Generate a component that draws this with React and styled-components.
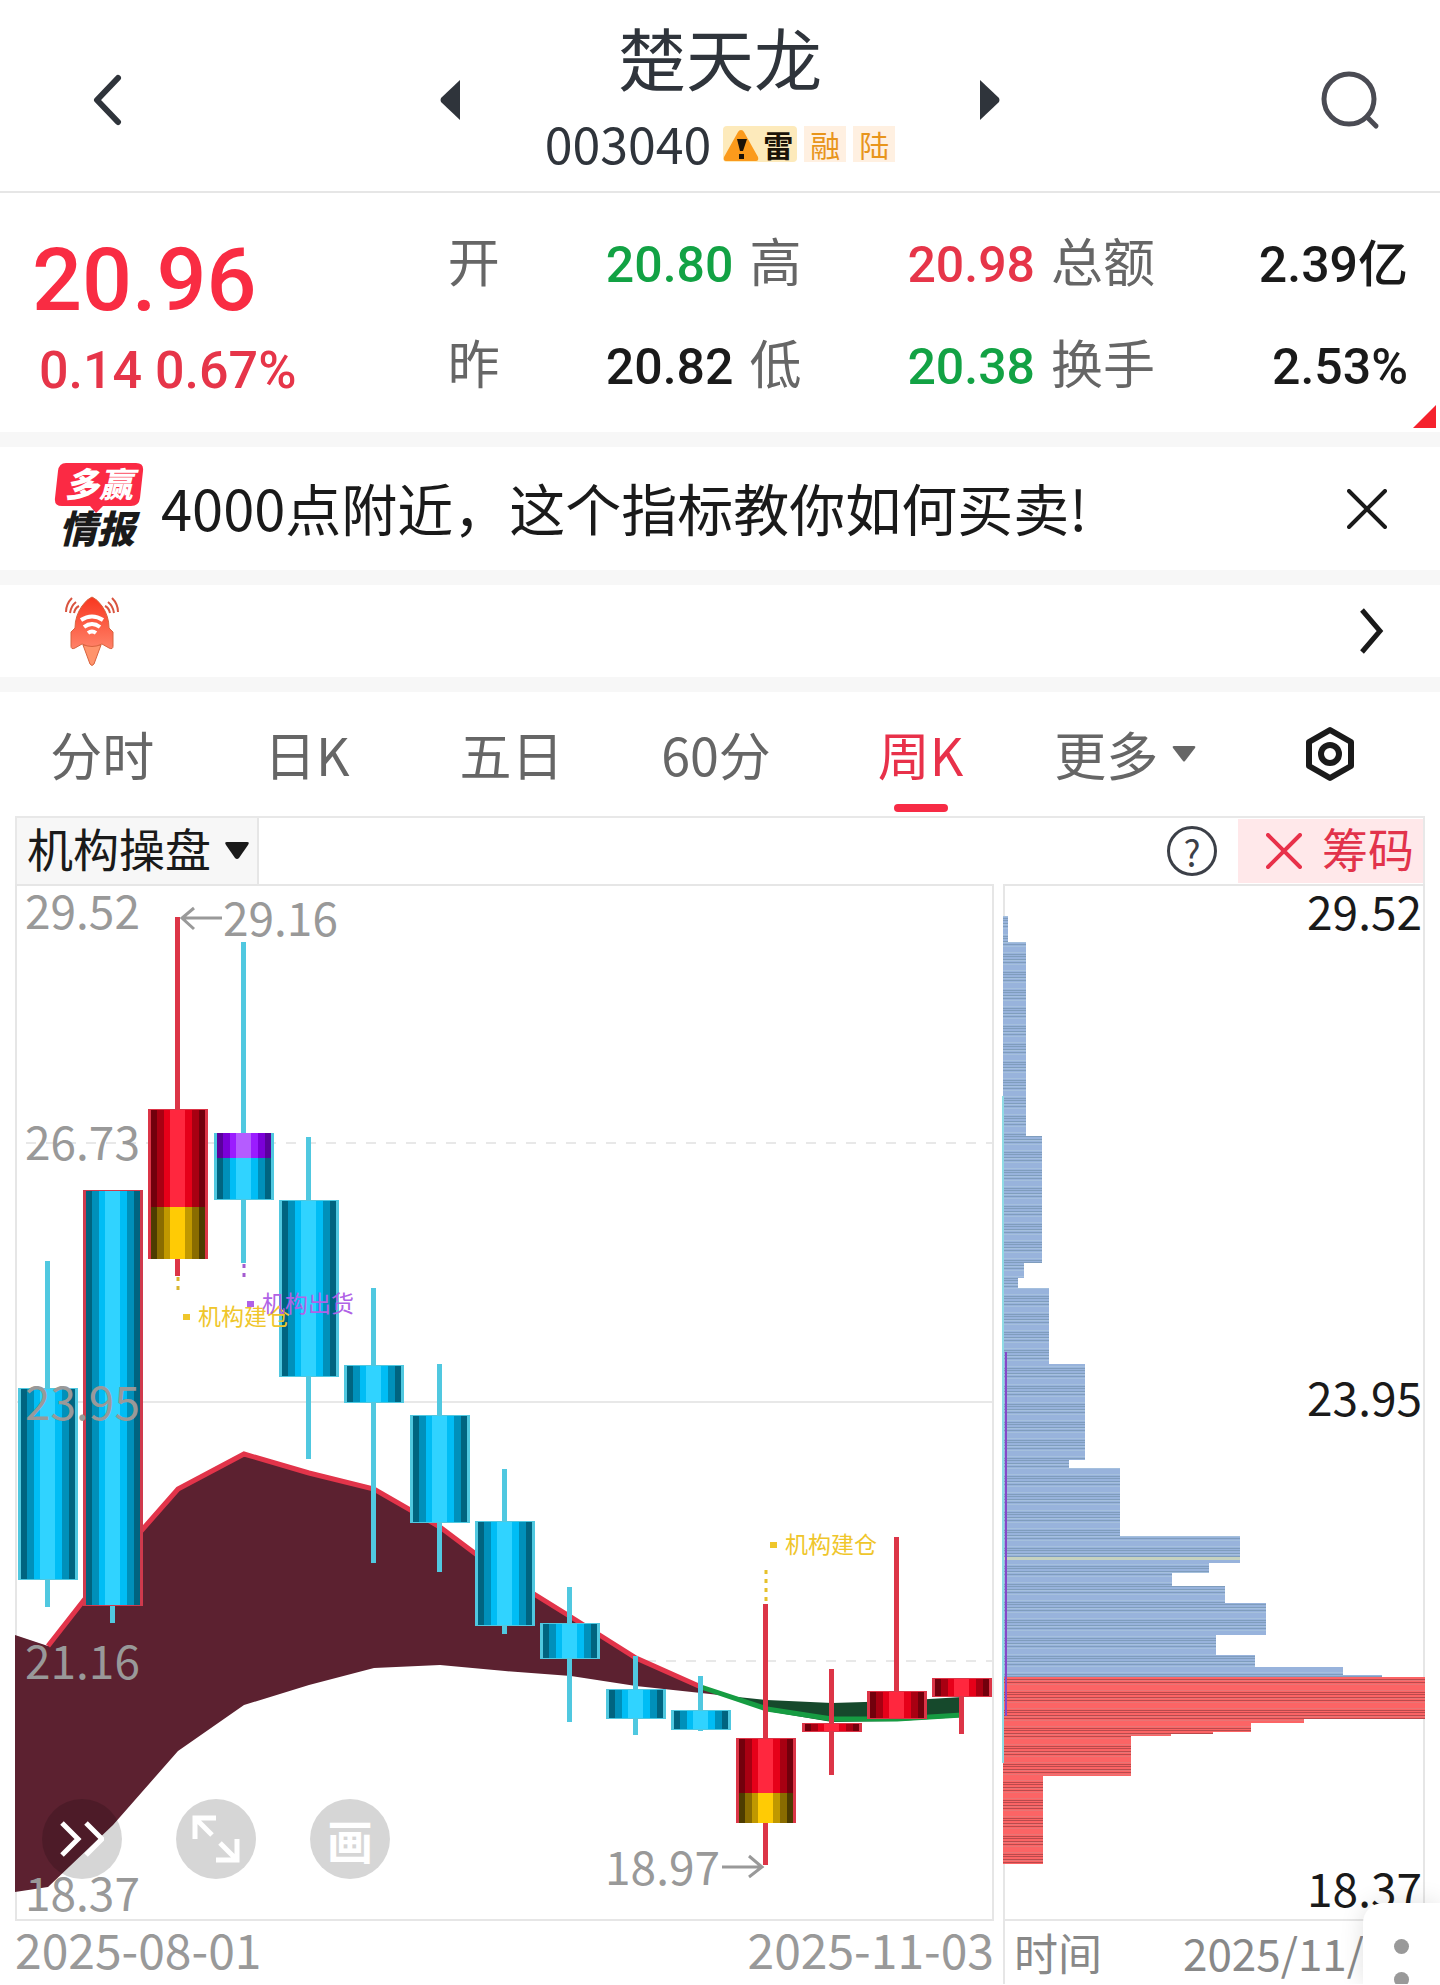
import { useState } from "react";
import styled, { createGlobalStyle } from "styled-components";

const STEP = 65.33;
const FIRST = 32.6;
const BODY = 60;

// high, low, body top and body bottom on the chart's own scale (93 units per yuan)
const candles = [
  { high: 377, top: 504, bottom: 696, low: 723, tone: "cyan" },
  { high: 306, top: 306, bottom: 722, low: 739, tone: "cyan", edge: "#cf3a4d" },
  { high: 33, top: 225, bottom: 375, low: 392, tone: "red", mark: { tone: "gold", from: 323, to: 375 } },
  { high: 58, top: 249, bottom: 316, low: 379, tone: "cyan", mark: { tone: "purple", from: 249, to: 274 } },
  { high: 253, top: 316, bottom: 493, low: 575, tone: "cyan" },
  { high: 404, top: 481, bottom: 519, low: 679, tone: "cyan" },
  { high: 480, top: 531, bottom: 639, low: 688, tone: "cyan" },
  { high: 585, top: 637, bottom: 742, low: 750, tone: "cyan" },
  { high: 703, top: 739, bottom: 775, low: 838, tone: "cyan" },
  { high: 772, top: 805, bottom: 835, low: 851, tone: "cyan" },
  { high: 792, top: 826, bottom: 846, low: 847, tone: "cyan" },
  { high: 720, top: 854, bottom: 939, low: 981, tone: "red", mark: { tone: "gold", from: 909, to: 939 } },
  { high: 785, top: 839, bottom: 848, low: 891, tone: "red" },
  { high: 653, top: 807, bottom: 835, low: 835, tone: "red" },
  { high: 794, top: 794, bottom: 813, low: 850, tone: "red" },
];

// darkest to brightest, from the side of a body to its middle
const tones = {
  cyan: { edge: "#50c8e0", shades: ["#006480", "#0090ba", "#00bdf5", "#30d3ff"] },
  red: { edge: "#dc3547", shades: ["#72000c", "#a80012", "#e60019", "#ff273e"] },
  gold: { edge: "#dc3547", shades: ["#4d3c00", "#8a6c00", "#c09800", "#ffcb05"] },
  purple: { edge: "#50c8e0", shades: ["#5a009c", "#7b00d8", "#9b1cff", "#b55cff"] },
};

const bands = [
  [3, 6, 0],
  [9, 7, 1],
  [16, 6, 2],
  [22, 15, 3],
  [37, 7, 2],
  [44, 7, 1],
  [51, 6, 0],
];

// [top, bottom, width]
const lossChips = [
  [32, 58, 5],
  [58, 252, 23],
  [252, 379, 39],
  [379, 394, 21],
  [394, 404, 15],
  [404, 480, 46],
  [480, 576, 82],
  [576, 584, 66],
  [584, 652, 117],
  [652, 679, 237],
  [679, 689, 206],
  [689, 702, 169],
  [702, 719, 222],
  [719, 751, 263],
  [751, 771, 213],
  [771, 783, 252],
  [783, 791, 340],
  [791, 793, 379],
];

const profitChips = [
  [793, 835, 422],
  [835, 839, 301],
  [839, 848, 248],
  [848, 850, 210],
  [850, 852, 168],
  [852, 892, 128],
  [892, 980, 40],
];

const quotes = [
  [
    { label: "开", value: "20.80", color: "#12a244" },
    { label: "昨", value: "20.82", color: "#1a1a1a" },
  ],
  [
    { label: "高", value: "20.98", color: "#e63549" },
    { label: "低", value: "20.38", color: "#12a244" },
  ],
  [
    { label: "总额", value: "2.39亿", color: "#1a1a1a" },
    { label: "换手", value: "2.53%", color: "#1a1a1a" },
  ],
];

const periods = ["分时", "日K", "五日", "60分", "周K"];

function Body({ x, from, to, tone }) {
  return bands.map(([dx, w, shade]) => (
    <rect
      key={dx}
      x={x + dx}
      y={from}
      width={w}
      height={to - from}
      fill={tones[tone].shades[shade]}
    />
  ));
}

function Candle({ data, index }) {
  const center = FIRST + STEP * index;
  const x = Math.round(center - BODY / 2);
  const edge = tones[data.tone].edge;
  return (
    <g shapeRendering="crispEdges">
      <rect
        x={x + 27}
        y={data.high}
        width="5"
        height={data.low - data.high}
        fill={edge}
      />
      <rect
        x={x}
        y={data.top}
        width={BODY}
        height={data.bottom - data.top}
        fill={data.edge || edge}
      />
      <Body x={x} from={data.top + 1} to={data.bottom - 1} tone={data.tone} />
      {data.mark && (
        <Body x={x} from={data.mark.from} to={data.mark.to} tone={data.mark.tone} />
      )}
    </g>
  );
}

function Signal({ x, y, color, children }) {
  return (
    <g fill={color}>
      <rect x={x} y={y - 11} width="7" height="6" />
      <SignalText x={x + 15} y={y}>
        {children}
      </SignalText>
    </g>
  );
}

function KLineChart() {
  return (
    <ChartSvg viewBox="0 0 979 1037" role="img" aria-label="周K线图">
      <rect x="1" y="1" width="977" height="1035" fill="#fff" stroke="#e6e6e6" strokeWidth="2" />
      <g stroke="#e8e8e8" strokeWidth="2">
        <line x1="11" y1="259" x2="977" y2="259" strokeDasharray="10 10" />
        <line x1="1" y1="518" x2="977" y2="518" />
        <line x1="11" y1="777" x2="977" y2="777" strokeDasharray="10 10" />
      </g>

      <path
        d="M0 751 L33 762 L98 679 L163 605 L229 570 L294 589 L359 605 L425 643 L490 692 L556 733 L621 774 L686 804 L713 812 L686 809 L621 802 L556 792 L490 787 L425 781 L359 784 L294 801 L229 821 L163 867 L98 941 L33 1003 L0 1008 Z"
        fill="#5c2130"
      />
      <path
        d="M713 812 L752 816 L817 819 L882 817 L947 813 L947 833 L882 837 L817 838 L752 827 Z"
        fill="#16492c"
      />
      <polyline
        points="33,762 98,679 163,605 229,570 294,589 359,605 425,643 490,692 556,733 621,774 686,803"
        fill="none"
        stroke="#e2344a"
        strokeWidth="5"
      />
      <polyline
        points="686,803 752,825 817,835 882,835 947,831"
        fill="none"
        stroke="#169c42"
        strokeWidth="5"
      />

      {candles.map((c, i) => (
        <Candle key={i} data={c} index={i} />
      ))}

      <g strokeWidth="3" strokeDasharray="4 5">
        <line x1="163" y1="393" x2="163" y2="408" stroke="#d9b62f" />
        <line x1="229" y1="380" x2="229" y2="395" stroke="#a45bd0" />
        <line x1="751" y1="686" x2="751" y2="720" stroke="#e6c02a" />
      </g>
      <Signal x={168} y={441} color="#efc62b">
        机构建仓
      </Signal>
      <Signal x={232} y={428} color="#b062e6">
        机构出货
      </Signal>
      <Signal x={755} y={669} color="#efc62b">
        机构建仓
      </Signal>

      <AxisText x="10" y="45">29.52</AxisText>
      <AxisText x="10" y="276">26.73</AxisText>
      <AxisText x="10" y="536">23.95</AxisText>
      <AxisText x="10" y="795">21.16</AxisText>
      <AxisText x="10" y="1027">18.37</AxisText>
      <AxisText x="208" y="52">29.16</AxisText>
      <AxisText x="705" y="1001" textAnchor="end">18.97</AxisText>
      <g fill="none" stroke="#999" strokeWidth="3">
        <path d="M207 34 H167 M179 24 L167 34 L179 45" />
        <path d="M707 983 H747 M734 972 L747 983 L734 993" />
      </g>
    </ChartSvg>
  );
}

function ChipChart() {
  return (
    <ChartSvg viewBox="0 0 422 1037" role="img" aria-label="筹码分布">
      <defs>
        <pattern id="loss" width="8" height="18" patternUnits="userSpaceOnUse">
          <rect width="8" height="18" fill="#98b3dc" />
          <path d="M0 .5 H8 M0 3.5 H8 M0 6.5 H8 M0 16.5 H8" stroke="#7f9dbd" />
          <path d="M0 4.5 H8 M0 8.5 H8 M0 14.5 H8" stroke="#a5c0dd" />
        </pattern>
        <pattern id="profit" width="8" height="18" patternUnits="userSpaceOnUse">
          <rect width="8" height="18" fill="#fc6465" />
          <path d="M0 .5 H8 M0 3.5 H8 M0 6.5 H8 M0 16.5 H8" stroke="#b94a4c" />
          <path d="M0 4.5 H8 M0 8.5 H8 M0 14.5 H8" stroke="#e87575" />
        </pattern>
      </defs>
      <rect x="1" y="1" width="420" height="1035" fill="#fff" stroke="#e6e6e6" strokeWidth="2" />
      {lossChips.map(([top, bottom, width]) => (
        <rect key={top} y={top} width={width} height={bottom - top} fill="url(#loss)" />
      ))}
      {profitChips.map(([top, bottom, width]) => (
        <rect key={top} y={top} width={width} height={bottom - top} fill="url(#profit)" />
      ))}
      <rect x="0" y="673" width="237" height="3" fill="#c5d2c0" />
      <rect x="-1" y="212" width="2" height="667" fill="#8edbe4" />
      <rect x="2" y="468" width="2" height="364" fill="#8648c8" />
      <ChipText x="419" y="46">29.52</ChipText>
      <ChipText x="419" y="532">23.95</ChipText>
      <ChipText x="419" y="1023">18.37</ChipText>
    </ChartSvg>
  );
}

function NewsLogo() {
  return (
    <LogoSvg width="92" height="96" viewBox="0 0 92 96" role="img" aria-label="多赢情报">
      <path
        d="M13 2 H83 Q91 2 90 10 L87 37 Q86 45 78 45 H50 L43 52 L37 45 H9 Q1 45 2 37 L5 10 Q6 2 13 2 Z"
        fill="#fb2a44"
      />
      <LogoText x="46" y="36" fill="#fff">
        多赢
      </LogoText>
      <LogoText x="44" y="82" fill="#1a1a1a" $large>
        情报
      </LogoText>
    </LogoSvg>
  );
}

function Rocket() {
  return (
    <svg width="54" height="70" viewBox="0 0 54 70" aria-hidden="true">
      <defs>
        <linearGradient id="hull" x1="0" y1="0" x2="0" y2="1">
          <stop offset="0" stopColor="#f8361f" />
          <stop offset="1" stopColor="#ff8268" />
        </linearGradient>
      </defs>
      <g fill="none" stroke="#d9543f" strokeWidth="2">
        <path d="M7 2 Q1 8 1 16 M11 6 Q6 10 5 17 M14 10 Q10 12 9 17" />
        <path d="M47 2 Q53 8 53 16 M43 6 Q48 10 49 17 M40 10 Q44 12 45 17" />
      </g>
      <path d="M18 49 H36 L29 68 Q27 71 25 68 Z" fill="#ff946c" stroke="#d8633f" />
      <path
        d="M27 1 Q32 3 37 10 Q44 20 44 32 L48 36 V50 Q48 54 44 52 L37 48 Q27 53 17 48 L10 52 Q6 54 6 50 V36 L10 32 Q10 20 17 10 Q22 3 27 1 Z"
        fill="url(#hull)"
        stroke="#d8633f"
      />
      <g fill="none" stroke="#fff" strokeWidth="4">
        <path d="M16 24 Q27 17 38 24" />
        <path d="M19 31 Q27 25 35 31" />
        <path d="M23 37 Q27 34 31 37" />
      </g>
    </svg>
  );
}

export default function App() {
  const [period, setPeriod] = useState("周K");

  return (
    <Page>
      <GlobalStyle />
      <Header>
        <HeaderSide>
          <IconButton aria-label="返回">
            <svg width="30" height="52" viewBox="0 0 30 52">
              <path d="M26 4 L5 26 L26 48" fill="none" stroke="#2f343b" strokeWidth="6" strokeLinecap="round" strokeLinejoin="round" />
            </svg>
          </IconButton>
        </HeaderSide>
        <Switcher>
          <IconButton aria-label="上一只">
            <svg width="20" height="40" viewBox="0 0 20 40">
              <path d="M20 0 V40 L1 22 Q0 20 1 18 Z" fill="#2f343b" />
            </svg>
          </IconButton>
          <StockName>
            <h1>楚天龙</h1>
            <CodeRow>
              <span>003040</span>
              <Tags>
                <RiskTag>
                  <svg width="36" height="36" viewBox="0 0 36 36" aria-hidden="true">
                    <path d="M18 4 Q20 4 21 6 L35 31 Q36 35 33 35 H3 Q0 35 1 31 L15 6 Q16 4 18 4 Z" fill="#fb9a1c" />
                    <path d="M14 13 H24 L20 25 H17 Z M16 28 H21 V33 H16 Z" fill="#1b1208" />
                  </svg>
                  雷
                </RiskTag>
                <Tag>融</Tag>
                <Tag>陆</Tag>
              </Tags>
            </CodeRow>
          </StockName>
          <IconButton aria-label="下一只">
            <svg width="20" height="40" viewBox="0 0 20 40">
              <path d="M0 0 V40 L19 22 Q20 20 19 18 Z" fill="#2f343b" />
            </svg>
          </IconButton>
        </Switcher>
        <HeaderSide $end>
          <IconButton aria-label="搜索">
            <svg width="60" height="60" viewBox="0 0 60 60">
              <circle cx="29" cy="29" r="25" fill="none" stroke="#4a4b53" strokeWidth="5" />
              <path d="M47 47 L56 56" stroke="#4a4b53" strokeWidth="5" strokeLinecap="round" />
            </svg>
          </IconButton>
        </HeaderSide>
      </Header>

      <Quote>
        <PriceBlock>
          <Price>20.96</Price>
          <Change>0.14 0.67%</Change>
        </PriceBlock>
        {quotes.map((column, i) => (
          <QuoteColumn key={i}>
            {column.map((item) => (
              <QuoteItem key={item.label}>
                <dt>{item.label}</dt>
                <QuoteValue $color={item.color}>{item.value}</QuoteValue>
              </QuoteItem>
            ))}
          </QuoteColumn>
        ))}
        <Corner />
      </Quote>

      <NewsBar>
        <NewsLogo />
        <NewsLink href="#news">4000点附近，这个指标教你如何买卖!</NewsLink>
        <IconButton aria-label="关闭">
          <svg width="40" height="40" viewBox="0 0 40 40">
            <path d="M2 2 L38 38 M38 2 L2 38" stroke="#1a1a1a" strokeWidth="4" strokeLinecap="round" />
          </svg>
        </IconButton>
      </NewsBar>

      <NoticeBar>
        <Rocket />
        <IconButton aria-label="查看">
          <svg width="24" height="46" viewBox="0 0 24 46">
            <path d="M2 2 L20 23 L2 44" fill="none" stroke="#1a1a1a" strokeWidth="5" />
          </svg>
        </IconButton>
      </NoticeBar>

      <Tabs>
        {periods.map((name) => (
          <Tab key={name} $active={name === period} onClick={() => setPeriod(name)}>
            {name}
          </Tab>
        ))}
        <Tab>
          更多
          <svg width="24" height="16" viewBox="0 0 24 16" aria-hidden="true">
            <path d="M2 0 H22 Q24 0 23 2 L13 15 Q12 16 11 15 L1 2 Q0 0 2 0 Z" fill="#666" />
          </svg>
        </Tab>
        <Tab aria-label="设置">
          <svg width="52" height="56" viewBox="0 0 52 56">
            <path d="M26 4 L47 16 V40 L26 52 L5 40 V16 Z" fill="none" stroke="#1a1a1a" strokeWidth="6" strokeLinejoin="round" />
            <circle cx="26" cy="28" r="9" fill="none" stroke="#1a1a1a" strokeWidth="6" />
          </svg>
        </Tab>
      </Tabs>

      <ChartArea>
        <Toolbar>
          <IndicatorPicker>
            <select aria-label="指标" defaultValue="机构操盘">
              <option>机构操盘</option>
            </select>
            <svg width="24" height="18" viewBox="0 0 24 18" aria-hidden="true">
              <path d="M2 0 H22 Q25 0 23 3 L14 16 Q12 18 10 16 L1 3 Q-1 0 2 0 Z" fill="#1a1a1a" />
            </svg>
          </IndicatorPicker>
          <HelpButton aria-label="帮助">?</HelpButton>
          <ChipButton>
            <svg width="36" height="36" viewBox="0 0 36 36" aria-hidden="true">
              <path d="M2 2 L34 34 M34 2 L2 34" stroke="#e8314a" strokeWidth="4" strokeLinecap="round" />
            </svg>
            <span>筹码</span>
          </ChipButton>
        </Toolbar>
        <Charts>
          <ChartPanel>
            <KLineChart />
            <ChartTools>
              <RoundButton aria-label="展开">
                <svg width="44" height="36" viewBox="0 0 44 36">
                  <path d="M2 2 L18 18 L2 34 M26 2 L42 18 L26 34" fill="none" stroke="#fff" strokeWidth="5" />
                </svg>
              </RoundButton>
              <RoundButton aria-label="全屏">
                <svg width="48" height="48" viewBox="0 0 48 48">
                  <path d="M3 24 V3 H24 M3 3 L20 20 M45 24 V45 H24 M45 45 L28 28" fill="none" stroke="#fff" strokeWidth="5" />
                </svg>
              </RoundButton>
              <RoundButton>画</RoundButton>
            </ChartTools>
          </ChartPanel>
          <ChartPanel>
            <ChipChart />
          </ChartPanel>
          <DateRow>
            <span>2025-08-01</span>
            <span>2025-11-03</span>
          </DateRow>
          <TimeRow>
            <span>时间</span>
            <span>2025/11/</span>
          </TimeRow>
        </Charts>
      </ChartArea>

      <MoreButton aria-label="更多操作">
        <i />
        <i />
      </MoreButton>
    </Page>
  );
}

const GlobalStyle = createGlobalStyle`
  * {
    box-sizing: border-box;
  }
  body {
    margin: 0;
    background: #fff;
    color: #1a1a1a;
    font-family: "Noto Sans CJK SC", sans-serif;
  }
  h1, dl, dt, dd {
    margin: 0;
    font-weight: 400;
  }
  button {
    border: 0;
    padding: 0;
    background: none;
    color: inherit;
    font-family: inherit;
    cursor: pointer;
  }
  svg {
    display: block;
    flex-shrink: 0;
  }
`;

const Page = styled.main`
  position: relative;
  overflow: hidden;
  width: 100%;
`;

const Header = styled.header`
  display: flex;
  align-items: center;
  min-height: 193px;
  padding-top: 8px;
  border-bottom: 2px solid #e6e6e6;
`;

const HeaderSide = styled.div`
  flex: 1 1 200px;
  display: flex;
  justify-content: ${(p) => (p.$end ? "flex-end" : "flex-start")};
  padding: ${(p) => (p.$end ? "0 60px 0 0" : "0 0 0 92px")};
`;

const IconButton = styled.button`
  display: flex;
  align-items: center;
  justify-content: center;
`;

const Switcher = styled.div`
  display: flex;
  align-items: center;
  justify-content: space-between;
  width: 560px;
`;

const StockName = styled.div`
  display: flex;
  flex-direction: column;
  align-items: center;
  gap: 20px;
  padding-bottom: 12px;
  color: #2f343b;
  h1 {
    font-size: 68px;
    line-height: 76px;
  }
`;

const CodeRow = styled.div`
  display: flex;
  align-items: center;
  gap: 12px;
  font-size: 50px;
  line-height: 54px;
`;

const Tags = styled.div`
  display: flex;
  gap: 7px;
  padding-top: 4px;
`;

const Tag = styled.span`
  display: flex;
  align-items: center;
  justify-content: center;
  width: 42px;
  height: 36px;
  background: #fff0e1;
  color: #e8951c;
  font-size: 30px;
  line-height: 36px;
`;

const RiskTag = styled(Tag)`
  width: 74px;
  gap: 4px;
  padding-right: 4px;
  border-radius: 4px;
  background: #fdeabb;
  color: #1b1208;
  font-weight: 700;
`;

const Quote = styled.section`
  position: relative;
  display: grid;
  grid-template-columns: 28fr 20fr 20fr 25fr;
  column-gap: 16px;
  padding: 31px 32px 34px;
  border-bottom: 15px solid #f7f7f7;
`;

const PriceBlock = styled.div`
  font-family: Roboto, "Noto Sans CJK SC", sans-serif;
  font-weight: 500;
`;

const Price = styled.div`
  padding-top: 8px;
  color: #f92c43;
  font-size: 88px;
  line-height: 96px;
`;

const Change = styled.div`
  padding: 16px 0 0 7px;
  color: #e63549;
  font-size: 52px;
  line-height: 54px;
`;

const QuoteColumn = styled.dl`
  display: flex;
  flex-direction: column;
  gap: 30px;
`;

const QuoteItem = styled.div`
  display: flex;
  align-items: baseline;
  justify-content: space-between;
  height: 72px;
  font-size: 52px;
  line-height: 72px;
  dt {
    color: #666;
  }
`;

const QuoteValue = styled.dd`
  color: ${(p) => p.$color};
  font-family: Roboto, "Noto Sans CJK SC", sans-serif;
  font-size: 50px;
  font-weight: 500;
`;

const Corner = styled.span`
  position: absolute;
  right: 4px;
  bottom: 4px;
  border-left: 23px solid transparent;
  border-bottom: 23px solid #f5222d;
`;

const NewsBar = styled.section`
  display: flex;
  align-items: center;
  gap: 16px;
  min-height: 138px;
  padding: 0 53px;
  border-bottom: 15px solid #f7f7f7;
`;

const NewsLink = styled.a`
  flex: 1;
  padding-bottom: 4px;
  color: #1a1a1a;
  font-size: 56px;
  line-height: 80px;
  text-decoration: none;
`;

const LogoSvg = styled.svg`
  overflow: visible;
`;

const LogoText = styled.text`
  font-size: ${(p) => (p.$large ? 38 : 34)}px;
  font-weight: 900;
  font-style: italic;
  text-anchor: middle;
`;

const NoticeBar = styled.section`
  display: flex;
  align-items: center;
  justify-content: space-between;
  min-height: 107px;
  padding: 0 56px 0 65px;
  border-bottom: 15px solid #f7f7f7;
`;

const Tabs = styled.nav`
  display: grid;
  grid-template-columns: repeat(7, 1fr);
  height: 124px;
  padding: 0 8px 0 0;
`;

const Tab = styled.button`
  position: relative;
  display: flex;
  align-items: center;
  justify-content: center;
  gap: 14px;
  color: ${(p) => (p.$active ? "#e8314a" : "#666")};
  font-size: 52px;
  line-height: 76px;
  &::after {
    content: "";
    display: ${(p) => (p.$active ? "block" : "none")};
    position: absolute;
    bottom: 4px;
    width: 54px;
    height: 8px;
    border-radius: 4px;
    background: #f72b45;
  }
`;

const ChartArea = styled.section`
  padding: 0 15px;
`;

const Toolbar = styled.div`
  display: flex;
  align-items: center;
  height: 68px;
  border: 2px solid #e8e8e8;
  border-bottom: 0;
`;

const IndicatorPicker = styled.label`
  display: flex;
  align-items: center;
  gap: 14px;
  height: 100%;
  margin-right: auto;
  padding: 0 8px 0 10px;
  border-right: 2px solid #e6e6e6;
  background: #f7f7f7;
  select {
    appearance: none;
    border: 0;
    padding: 0 0 8px;
    background: none;
    color: #1a1a1a;
    font-family: inherit;
    font-size: 46px;
    line-height: 58px;
  }
`;

const HelpButton = styled.button`
  width: 50px;
  height: 50px;
  margin-right: 21px;
  border: 3px solid #3c4048;
  border-radius: 50%;
  color: #3c4048;
  font-size: 36px;
  line-height: 40px;
`;

const ChipButton = styled.button`
  display: flex;
  align-items: center;
  gap: 20px;
  height: 64px;
  padding: 0 9px 0 28px;
  background: #ffe8ea;
  color: #e2334b;
  font-size: 46px;
  line-height: 58px;
  span {
    padding-bottom: 8px;
  }
`;

const Charts = styled.div`
  display: grid;
  grid-template-columns: 979fr 422fr;
  column-gap: 9px;
`;

const ChartPanel = styled.div`
  position: relative;
  min-width: 0;
`;

const ChartSvg = styled.svg`
  width: 100%;
  height: auto;
  overflow: visible;
`;

const AxisText = styled.text`
  fill: #999;
  font-size: 46px;
`;

const ChipText = styled.text`
  fill: #1a1a1a;
  font-size: 46px;
  text-anchor: end;
`;

const SignalText = styled.text`
  font-size: 23px;
`;

const ChartTools = styled.div`
  position: absolute;
  left: 27px;
  bottom: 42px;
  display: flex;
  gap: 54px;
`;

const RoundButton = styled.button`
  display: flex;
  align-items: center;
  justify-content: center;
  width: 80px;
  height: 80px;
  border-radius: 50%;
  background: rgba(0, 0, 0, 0.16);
  color: #fff;
  font-size: 46px;
  font-weight: 700;
  line-height: 72px;
`;

const DateRow = styled.div`
  display: flex;
  justify-content: space-between;
  height: 63px;
  color: #999;
  font-size: 48px;
  line-height: 54px;
`;

const TimeRow = styled(DateRow)`
  padding: 0 61px 0 9px;
  border-left: 2px solid #e6e6e6;
  color: #888;
  font-size: 44px;
  line-height: 62px;
`;

const MoreButton = styled.button`
  position: absolute;
  right: 0;
  bottom: 0;
  display: flex;
  flex-direction: column;
  align-items: center;
  gap: 18px;
  width: 77px;
  height: 81px;
  padding-top: 36px;
  overflow: hidden;
  border-radius: 20px 0 0 0;
  background: #fff;
  box-shadow: 0 0 24px rgba(0, 0, 0, 0.12);
  i {
    flex-shrink: 0;
    width: 15px;
    height: 15px;
    border-radius: 50%;
    background: #999;
  }
`;
